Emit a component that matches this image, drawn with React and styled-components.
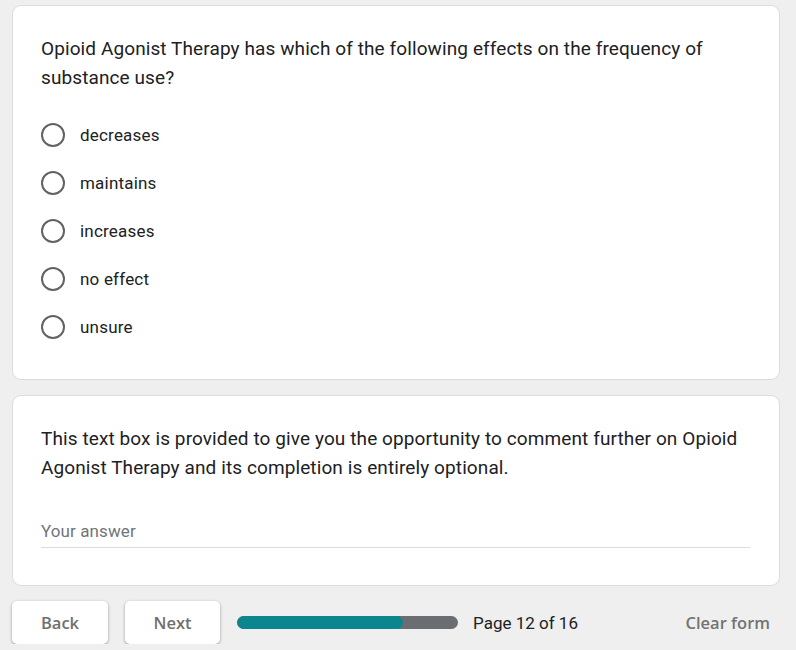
import styled, { createGlobalStyle } from "styled-components";

const Global = createGlobalStyle`
  html, body {
    margin: 0;
    padding: 0;
    background: #efefef;
  }
  body {
    font-family: Roboto, "Liberation Sans", sans-serif;
    color: #202124;
  }
`;

const Page = styled.div`
  width: 768px;
  padding: 5px 16px 0 12px;
  display: flex;
  flex-direction: column;
  gap: 15px;
`;

const Card = styled.div`
  background: #fff;
  border: 1px solid #dadce0;
  border-radius: 9px;
  padding: ${({ $pad }) => $pad || "28px 28px 28px"};
`;

const Title = styled.div`
  font-size: 19px;
  line-height: 29px;
  letter-spacing: 0.1px;
  color: #202124;
`;

const Options = styled.div`
  margin-top: 19px;
  display: flex;
  flex-direction: column;
`;

const Option = styled.label`
  display: flex;
  align-items: center;
  height: 48px;
  gap: 15px;
  font-size: 17px;
  letter-spacing: 0.2px;
  color: #202124;
`;

const Radio = styled.span`
  box-sizing: border-box;
  width: 24px;
  height: 24px;
  border-radius: 50%;
  border: 2px solid #5f6368;
  flex: none;
`;

const Answer = styled.div`
  margin-top: 39px;
  border-bottom: 1px solid #dadce0;
  width: 709px;
  padding-bottom: 6px;
  font-size: 17px;
  color: #70757a;
  letter-spacing: 0.1px;
`;

const Footer = styled.div`
  display: flex;
  align-items: center;
  gap: 17px;
  height: 43px;
`;

const Button = styled.button`
  box-sizing: border-box;
  width: ${({ $w }) => $w}px;
  height: 43px;
  border: none;
  border-radius: 5px;
  background: #fff;
  box-shadow: 0 1px 2px rgba(60, 64, 67, 0.3), 0 1px 3px 1px rgba(60, 64, 67, 0.15);
  font-family: "Open Sans", Roboto, sans-serif;
  font-weight: 600;
  font-size: 16.5px;
  color: #6f6f6f;
  padding: 0;
`;

const Progress = styled.div`
  display: flex;
  align-items: center;
  gap: 15px;
  flex: 1;
`;

const Track = styled.div`
  width: 221px;
  height: 13px;
  border-radius: 7px;
  background: #6a6d72;
  overflow: hidden;
`;

const Fill = styled.div`
  height: 100%;
  background: #0b858e;
  border-radius: 7px;
`;

const PageLabel = styled.span`
  font-size: 17px;
  color: #202124;
`;

const Clear = styled.span`
  font-family: "Open Sans", Roboto, sans-serif;
  font-weight: 600;
  font-size: 16.5px;
  color: #737373;
  margin-right: 10px;
`;

const choices = ["decreases", "maintains", "increases", "no effect", "unsure"];

export default function App() {
  const page = 12;
  const total = 16;
  return (
    <>
      <Global />
      <Page>
        <Card>
          <Title>
            Opioid Agonist Therapy has which of the following effects on the frequency of substance use?
          </Title>
          <Options>
            {choices.map((c) => (
              <Option key={c}>
                <Radio />
                {c}
              </Option>
            ))}
          </Options>
        </Card>
        <Card $pad="28px 28px 37px">
          <Title>
            This text box is provided to give you the opportunity to comment further on Opioid Agonist Therapy and its completion is entirely optional.
          </Title>
          <Answer>Your answer</Answer>
        </Card>
        <Footer>
          <Button $w={96}>Back</Button>
          <Button $w={95}>Next</Button>
          <Progress>
            <Track>
              <Fill style={{ width: `${(page / total) * 100}%` }} />
            </Track>
            <PageLabel>
              Page {page} of {total}
            </PageLabel>
          </Progress>
          <Clear>Clear form</Clear>
        </Footer>
      </Page>
    </>
  );
}
